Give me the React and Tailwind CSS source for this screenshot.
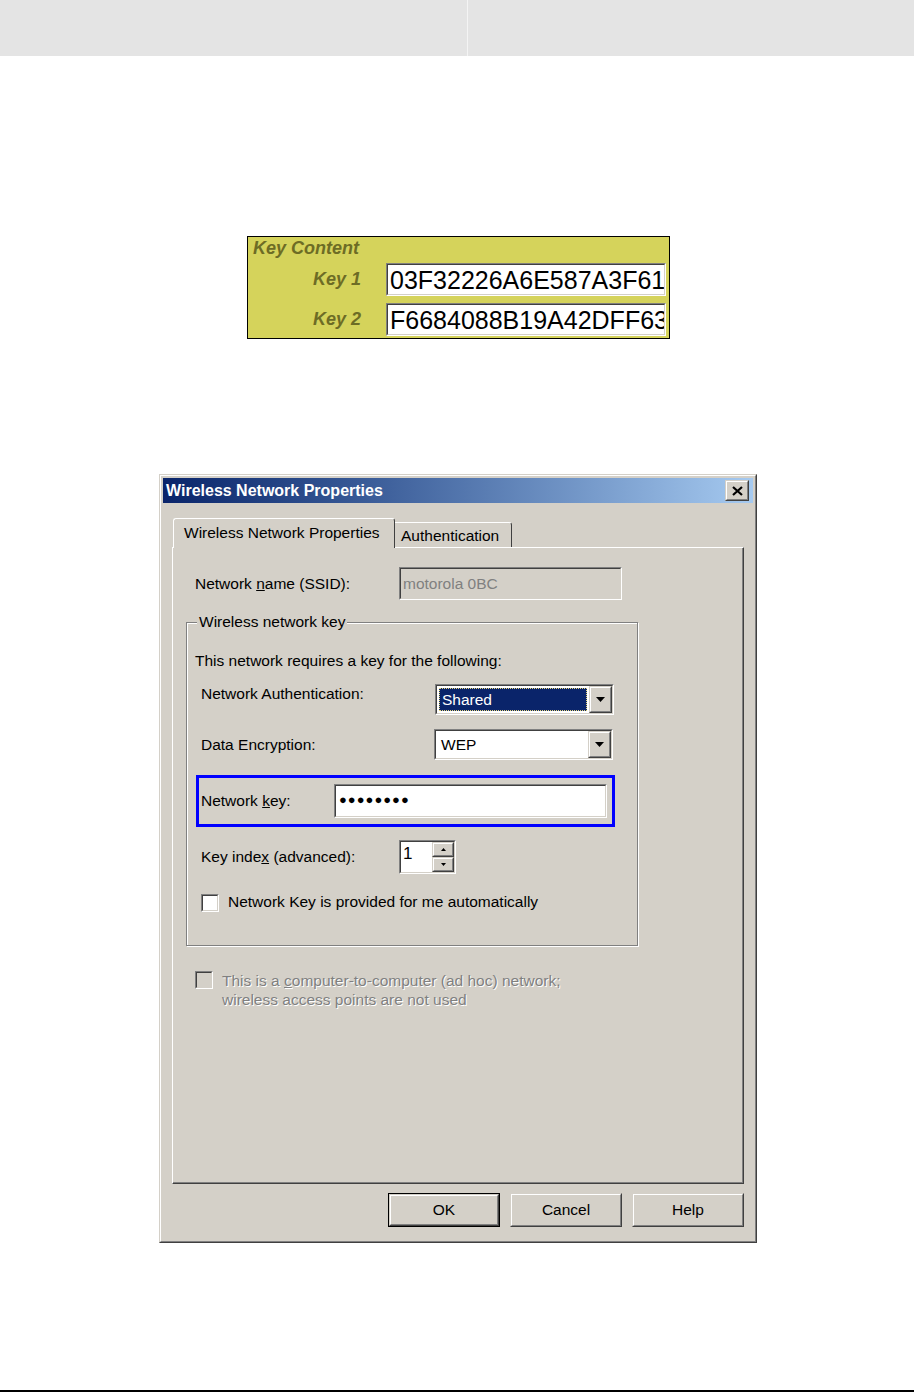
import React from 'react';

const sans = "font-['Liberation_Sans',Arial,sans-serif]";

function Inset({ className = '', inner = 'bg-white', children }) {
  return (
    <div className={'border border-t-[#808080] border-l-[#808080] border-b-white border-r-white ' + className}>
      <div className={'h-full w-full border border-t-[#404040] border-l-[#404040] border-b-[#d4d0c8] border-r-[#d4d0c8] ' + inner}>
        {children}
      </div>
    </div>
  );
}

function Raised({ className = '', children }) {
  return (
    <div className={'border border-t-[#d4d0c8] border-l-[#d4d0c8] border-b-[#404040] border-r-[#404040] bg-[#d4d0c8] ' + className}>
      <div className="h-full w-full border border-t-white border-l-white border-b-[#808080] border-r-[#808080] flex items-center justify-center">
        {children}
      </div>
    </div>
  );
}

function Arrow({ small }) {
  return small ? (
    <svg width="5" height="3" viewBox="0 0 5 3"><path d="M0 0h5L2.5 3z" fill="#000" /></svg>
  ) : (
    <svg width="9" height="5" viewBox="0 0 9 5"><path d="M0 0h9L4.5 5z" fill="#000" /></svg>
  );
}

function Select({ value, selected }) {
  return (
    <Inset className="w-[179px] h-[31px]">
      <div className="flex h-full items-stretch">
        <div className="flex-1 p-[2px]">
          {selected ? (
            <div className="h-full border border-dotted border-[#e8d67a] bg-[#0a246a] text-white px-[2px] flex items-center leading-none">
              {value}
            </div>
          ) : (
            <div className="h-full px-[3px] flex items-center leading-none">{value}</div>
          )}
        </div>
        <Raised className="w-[23px]">
          <Arrow />
        </Raised>
      </div>
    </Inset>
  );
}

function CheckBox({ disabled }) {
  return (
    <Inset className="w-[18px] h-[18px] shrink-0" inner={disabled ? 'bg-[#d4d0c8]' : 'bg-white'} />
  );
}

function KeyRow({ label, value }) {
  return (
    <div className="flex items-center h-[33px]">
      <div className="w-[114px] pr-[1px] text-right text-[18px] font-bold italic text-[#6d6c25]">{label}</div>
      <Inset className="ml-[24px] w-[280px] h-[33px]">
        <div className="h-full overflow-hidden whitespace-nowrap pl-[2px] text-[25px] leading-[31px] text-black">{value}</div>
      </Inset>
    </div>
  );
}

export default function App() {
  return (
    <div className={'min-h-[1392px] flex flex-col bg-white ' + sans}>
      <div className="h-[56px] bg-[#e4e4e4] flex">
        <div className="w-[468px] border-r border-[#f4f4f4]" />
      </div>

      <div className="ml-[247px] mt-[180px] w-[423px] h-[103px] border border-black bg-[#d5d35b] pr-[3px]">
        <div className="h-[24px] pl-[5px] text-[18px] font-bold italic leading-[22px] text-[#6d6c25]">Key Content</div>
        <div className="mt-[2px] flex flex-col gap-[7px]">
          <KeyRow label="Key 1" value="03F32226A6E587A3F61D" />
          <KeyRow label="Key 2" value="F6684088B19A42DFF63E" />
        </div>
      </div>

      <div className="ml-[159px] mt-[135px] w-[598px] h-[769px] border border-t-[#d4d0c8] border-l-[#d4d0c8] border-b-[#404040] border-r-[#404040] bg-[#d4d0c8]">
        <div className="h-full border border-t-white border-l-white border-b-[#808080] border-r-[#808080] p-[2px] flex flex-col text-[15.5px] text-black">
          <div className="h-[25px] flex items-center justify-between pl-[3px] pr-[4px] bg-gradient-to-r from-[#0a246a] to-[#a6caf0]">
            <span className="text-[16px] font-bold text-white">Wireless Network Properties</span>
            <Raised className="w-[24px] h-[21px]">
              <svg width="11" height="10" viewBox="0 0 11 10">
                <path d="M1 1l9 8M10 1l-9 8" stroke="#000" strokeWidth="2.2" />
              </svg>
            </Raised>
          </div>

          <div className="flex-1 flex flex-col pl-[9px] pr-[9px]">
            <div className="mt-[15px] flex items-end pl-[1px]">
              <div className="relative z-10 -mb-px h-[30px] w-[222px] rounded-tl-[3px] rounded-tr-[3px] border-l border-t border-r border-l-white border-t-white border-r-[#404040] bg-[#d4d0c8] pl-[10px] pt-[2px]">
                Wireless Network Properties
              </div>
              <div className="h-[25px] w-[117px] rounded-tr-[3px] border-t border-r border-t-white border-r-[#404040] pl-[6px] pt-[1px]">
                Authentication
              </div>
            </div>

            <div className="h-[637px] border border-t-white border-l-white border-b-[#404040] border-r-[#404040]">
              <div className="h-full border-r border-b border-r-[#808080] border-b-[#808080] pl-[22px] pr-[10px] flex flex-col">
                <div className="mt-[19px] flex items-center">
                  <div className="w-[204px]">
                    Network <span className="underline">n</span>ame (SSID):
                  </div>
                  <Inset className="w-[223px] h-[33px]" inner="bg-[#d4d0c8]">
                    <div className="h-full flex items-center px-[2px] text-[#808080]">motorola 0BC</div>
                  </Inset>
                </div>

                <div className="relative -ml-[9px] mt-[22px] w-[452px] h-[324px] border border-[#808080] shadow-[inset_1px_1px_0_#fff,1px_1px_0_#fff] pl-[8px] flex flex-col">
                  <span className="absolute -top-[11px] left-[10px] bg-[#d4d0c8] px-[2px] leading-[20px]">Wireless network key</span>

                  <div className="mt-[28px] leading-[20px]">This network requires a key for the following:</div>

                  <div className="mt-[13px] flex items-start pl-[6px]">
                    <div className="w-[234px] -mt-[2px]">Network Authentication:</div>
                    <Select value="Shared" selected />
                  </div>

                  <div className="mt-[14px] flex items-start pl-[6px]">
                    <div className="w-[233px] pt-[4px]">Data Encryption:</div>
                    <Select value="WEP" />
                  </div>

                  <div className="mt-[15px] ml-[1px] w-[419px] h-[52px] border-[3px] border-[#0000ff] flex items-center pl-[2px]">
                    <div className="w-[133px]">
                      Network <span className="underline">k</span>ey:
                    </div>
                    <Inset className="w-[273px] h-[34px]">
                      <div className="h-full flex items-center px-[3px] text-[13px] tracking-[1px] pb-[3px]">●●●●●●●●</div>
                    </Inset>
                  </div>

                  <div className="mt-[13px] flex items-center pl-[6px]">
                    <div className="w-[198px]">
                      Key inde<span className="underline">x</span> (advanced):
                    </div>
                    <Inset className="w-[57px] h-[34px]">
                      <div className="flex h-full">
                        <div className="flex-1 pl-[2px] text-[17px] leading-[24px]">1</div>
                        <div className="w-[22px] flex flex-col">
                          <Raised className="flex-1">
                            <svg width="5" height="3" viewBox="0 0 5 3"><path d="M2.5 0L5 3H0z" fill="#000" /></svg>
                          </Raised>
                          <Raised className="flex-1">
                            <Arrow small />
                          </Raised>
                        </div>
                      </div>
                    </Inset>
                  </div>

                  <div className="mt-[18px] flex items-center pl-[6px] gap-[9px]">
                    <CheckBox />
                    <span className="-mt-[2px]">Network Key is provided for me automatically</span>
                  </div>
                </div>

                <div className="mt-[25px] flex items-start gap-[9px] text-[#808080] [text-shadow:1px_1px_0_#fff]">
                  <CheckBox disabled />
                  <div className="leading-[19px]">
                    This is a <span className="underline">c</span>omputer-to-computer (ad hoc) network;
                    <br />
                    wireless access points are not used
                  </div>
                </div>
              </div>
            </div>

            <div className="mt-[9px] flex justify-end gap-[10px]">
              <div className="border border-black">
                <Raised className="w-[110px] h-[32px]">OK</Raised>
              </div>
              <Raised className="w-[112px] h-[34px]">Cancel</Raised>
              <Raised className="w-[112px] h-[34px]">Help</Raised>
            </div>
          </div>
        </div>
      </div>

      <div className="mt-auto h-[2px] bg-black" />
    </div>
  );
}
